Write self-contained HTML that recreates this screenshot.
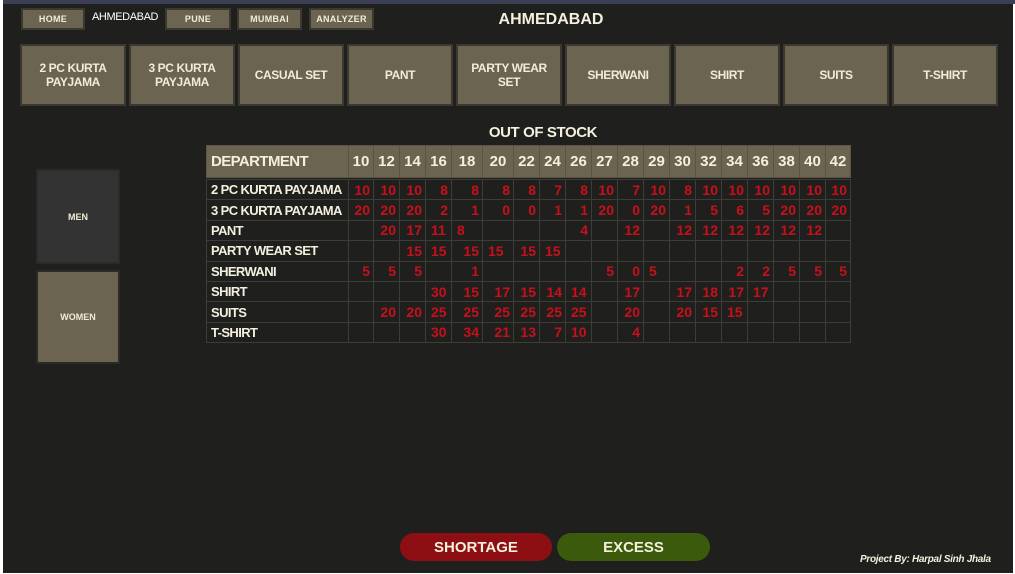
<!DOCTYPE html>
<html><head><meta charset="utf-8"><style>
*{margin:0;padding:0;box-sizing:border-box}
body{width:1015px;height:574px;background:#fff;position:relative;overflow:hidden;font-family:"Liberation Sans",sans-serif}
#bg{position:absolute;left:3px;top:0;width:1010px;height:573px;background:#1f1f1e}
#topbar{position:absolute;left:3px;top:0;width:1012px;height:4px;background:#3b3f55}
.a{position:absolute}
.nav{position:absolute;top:8px;height:22px;background:#6b6450;border:2px solid #3a3830;color:#f2ecd6;font-size:9px;font-weight:bold;display:flex;align-items:center;justify-content:center;letter-spacing:.3px}
.cat{position:absolute;top:44px;width:106px;height:62px;background:#6b6450;border:2px solid #3a3830;color:#f2ecd6;font-size:12px;font-weight:bold;display:flex;align-items:center;justify-content:center;text-align:center;line-height:14px;letter-spacing:-.4px}
.side{position:absolute;left:36px;width:84px;border:2px solid #2a2a28;color:#f2ecd6;font-size:9px;font-weight:bold;display:flex;align-items:center;justify-content:center}
table{position:absolute;left:206px;top:145px;border-collapse:collapse;table-layout:fixed}
td{border:1px solid #3d3d35;height:20.4px;color:#c8101a;font-weight:bold;font-size:14px;text-align:right;padding:0 3px 0 2px;white-space:nowrap;overflow:hidden}
td.l{text-align:left;padding-left:5px}
td.d{color:#f4f0de;text-align:left;font-size:13px;letter-spacing:-.6px;padding-left:4px}
tr.h td{background:#6b6450;color:#f4f0de;font-size:15px;height:32px;text-align:center;padding:0;border-color:#5a5444}
tr.h td.d{text-align:left;padding-left:4px;font-size:15px}
tr.g td{height:2px;padding:0;border:none}
.btn{position:absolute;top:533px;height:28px;border-radius:14px;color:#f4f0de;font-weight:bold;font-size:15px;display:flex;align-items:center;justify-content:center}
</style></head><body>
<div id="bg"></div><div id="topbar"></div>
<div class="nav" style="left:21px;width:64px">HOME</div>
<div class="a" style="left:92px;top:11px;font-size:11px;color:#fff;letter-spacing:-.4px">AHMEDABAD</div>
<div class="nav" style="left:165px;width:66px">PUNE</div>
<div class="nav" style="left:237px;width:65px">MUMBAI</div>
<div class="nav" style="left:309px;width:65px">ANALYZER</div>
<div class="a" style="left:451px;width:200px;text-align:center;top:11px;color:#f4f0de;font-size:16px;font-weight:bold">AHMEDABAD</div>
<div class="cat" style="left:20px">2 PC KURTA<br>PAYJAMA</div>
<div class="cat" style="left:129px">3 PC KURTA<br>PAYJAMA</div>
<div class="cat" style="left:238px">CASUAL SET</div>
<div class="cat" style="left:347px">PANT</div>
<div class="cat" style="left:456px">PARTY WEAR<br>SET</div>
<div class="cat" style="left:565px">SHERWANI</div>
<div class="cat" style="left:674px">SHIRT</div>
<div class="cat" style="left:783px">SUITS</div>
<div class="cat" style="left:892px">T-SHIRT</div>
<div class="a" style="left:443px;width:200px;text-align:center;top:124px;color:#f4f0de;font-size:15px;font-weight:bold;letter-spacing:-.4px">OUT OF STOCK</div>
<div class="side" style="top:169px;height:95px;background:#333">MEN</div>
<div class="side" style="top:270px;height:94px;background:#6b6450">WOMEN</div>
<table>
<colgroup><col style="width:142px"><col style="width:25px"><col style="width:26px"><col style="width:26px"><col style="width:26px"><col style="width:31px"><col style="width:31px"><col style="width:26px"><col style="width:26px"><col style="width:26px"><col style="width:26px"><col style="width:26px"><col style="width:26px"><col style="width:26px"><col style="width:26px"><col style="width:26px"><col style="width:26px"><col style="width:26px"><col style="width:26px"><col style="width:25px"></colgroup>
<tr class="h"><td class="d">DEPARTMENT</td><td>10</td><td>12</td><td>14</td><td>16</td><td>18</td><td>20</td><td>22</td><td>24</td><td>26</td><td>27</td><td>28</td><td>29</td><td>30</td><td>32</td><td>34</td><td>36</td><td>38</td><td>40</td><td>42</td></tr>
<tr class="g"><td colspan="20"></td></tr>
<tr><td class="d">2 PC KURTA PAYJAMA</td><td>10</td><td>10</td><td>10</td><td>8</td><td>8</td><td>8</td><td>8</td><td>7</td><td>8</td><td>10</td><td>7</td><td>10</td><td>8</td><td>10</td><td>10</td><td>10</td><td>10</td><td>10</td><td>10</td></tr>
<tr><td class="d">3 PC KURTA PAYJAMA</td><td>20</td><td>20</td><td>20</td><td>2</td><td>1</td><td>0</td><td>0</td><td>1</td><td>1</td><td>20</td><td>0</td><td>20</td><td>1</td><td>5</td><td>6</td><td>5</td><td>20</td><td>20</td><td>20</td></tr>
<tr><td class="d">PANT</td><td></td><td>20</td><td>17</td><td class="l">11</td><td class="l">8</td><td></td><td></td><td></td><td>4</td><td></td><td>12</td><td></td><td>12</td><td>12</td><td>12</td><td>12</td><td>12</td><td>12</td><td></td></tr>
<tr><td class="d">PARTY WEAR SET</td><td></td><td></td><td>15</td><td class="l">15</td><td>15</td><td class="l">15</td><td>15</td><td class="l">15</td><td></td><td></td><td></td><td></td><td></td><td></td><td></td><td></td><td></td><td></td><td></td></tr>
<tr><td class="d">SHERWANI</td><td>5</td><td>5</td><td>5</td><td></td><td>1</td><td></td><td></td><td></td><td></td><td>5</td><td>0</td><td class="l">5</td><td></td><td></td><td>2</td><td>2</td><td>5</td><td>5</td><td>5</td></tr>
<tr><td class="d">SHIRT</td><td></td><td></td><td></td><td class="l">30</td><td>15</td><td>17</td><td>15</td><td>14</td><td class="l">14</td><td></td><td>17</td><td></td><td>17</td><td>18</td><td>17</td><td class="l">17</td><td></td><td></td><td></td></tr>
<tr><td class="d">SUITS</td><td></td><td>20</td><td>20</td><td class="l">25</td><td>25</td><td>25</td><td>25</td><td>25</td><td class="l">25</td><td></td><td>20</td><td></td><td>20</td><td>15</td><td class="l">15</td><td></td><td></td><td></td><td></td></tr>
<tr><td class="d">T-SHIRT</td><td></td><td></td><td></td><td class="l">30</td><td>34</td><td>21</td><td>13</td><td>7</td><td class="l">10</td><td></td><td>4</td><td></td><td></td><td></td><td></td><td></td><td></td><td></td><td></td></tr>
</table>
<div class="btn" style="left:400px;width:152px;background:#8d0f14">SHORTAGE</div>
<div class="btn" style="left:557px;width:153px;background:#3b5a0c">EXCESS</div>
<div class="a" style="left:860px;top:554px;color:#f4f0de;font-size:10px;font-weight:bold;font-style:italic;letter-spacing:-.3px">Project By: Harpal Sinh Jhala</div>
</body></html>
